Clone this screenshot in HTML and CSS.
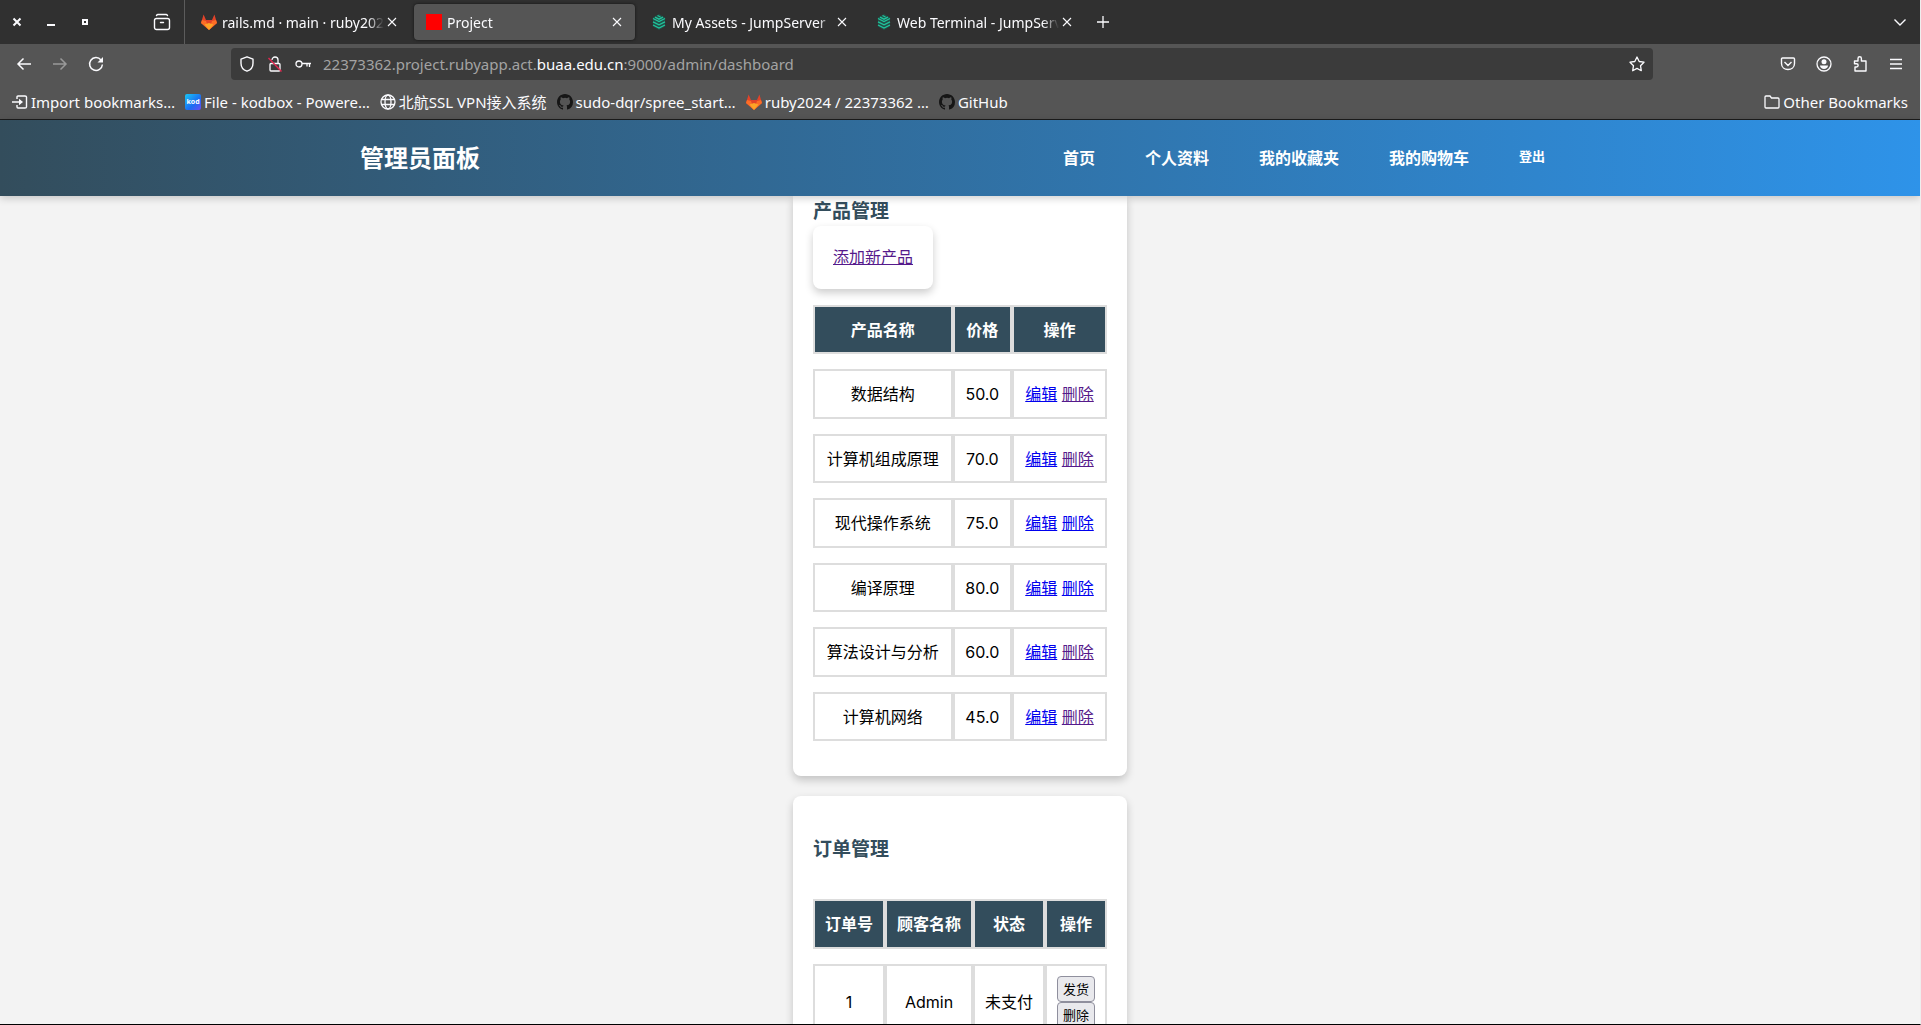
FILE: index.html
```html
<!DOCTYPE html>
<html lang="zh-CN">
<head>
<meta charset="utf-8">
<meta name="viewport" content="width=device-width, initial-scale=1">
<title>Project</title>
<link rel="stylesheet" href="styles.css">
</head>
<body>
<svg class="defs" aria-hidden="true">
  <symbol id="fox" viewBox="0 0 16 16"><path fill="#e24329" d="M0 9 2.600 .5 5 6h6l2.400-5.500L16 9l-8 7z"/><path fill="#fc6d26" d="M0 9l1-3 4 1 3 9zM16 9l-1-3-4 1-3 9z"/><path fill="#fca326" d="M3.500 10.500L8 9l4.500 1.500L8 16z"/></symbol>
  <symbol id="cross" viewBox="0 0 16 16"><path d="M4 4l8 8M12 4l-8 8" fill="none" stroke="currentColor" stroke-width="1.100"/></symbol>
  <symbol id="server" viewBox="0 0 16 16"><path d="M8 0l6 3.500v9L8 16l-6-3.500v-9z" fill="#225048"/><path d="M2 4.500l6 3 6-3M2 7.800l6 3 6-3M2 11l6 3 6-3M4 3.200l4 2 4-2M6.500 1.500l3 1.500" fill="none" stroke="#20c49c" stroke-width="1.300"/></symbol>
  <symbol id="cat" viewBox="0 0 16 16"><path fill="#161616" d="M8 0C3.580 0 0 3.580 0 8c0 3.540 2.290 6.530 5.470 7.590.4.070.55-.17.55-.38 0-.19-.01-.82-.01-1.490-2.010.37-2.530-.49-2.690-.94-.09-.23-.48-.94-.82-1.130-.28-.15-.68-.52-.01-.53.63-.01 1.080.58 1.230.82.72 1.210 1.870.87 2.330.66.07-.52.28-.87.51-1.070-1.780-.2-3.640-.89-3.640-3.950 0-.87.31-1.590.82-2.150-.08-.2-.36-1.020.08-2.120 0 0 .67-.21 2.200.82a7.420 7.420 0 0 1 4 0c1.530-1.040 2.200-.82 2.200-.82.44 1.100.16 1.920.08 2.120.51.56.82 1.270.82 2.150 0 3.070-1.870 3.750-3.650 3.950.29.25.54.73.54 1.480 0 1.070-.01 1.930-.01 2.200 0 .21.15.46.55.38A8.010 8.010 0 0 0 16 8c0-4.420-3.580-8-8-8z"/></symbol>
</svg>

<div class="browser">
  <div class="tabbar">
    <div class="window-controls">
      <button class="win" aria-label="Close window"><svg viewBox="0 0 16 16"><path d="M4.500 4.500l7 7M11.500 4.500l-7 7" stroke="currentColor" stroke-width="2"/></svg></button>
      <button class="win" aria-label="Minimise"><svg viewBox="0 0 16 16"><path d="M4 11h8" stroke="currentColor" stroke-width="2"/></svg></button>
      <button class="win" aria-label="Restore"><svg viewBox="0 0 16 16"><path d="M6 6h4v4H6z" fill="none" stroke="currentColor" stroke-width="2"/></svg></button>
    </div>
    <button class="tabs-view" aria-label="Firefox View"><svg viewBox="0 0 18 18" fill="none" stroke="currentColor" stroke-width="1.400" stroke-linecap="round"><rect x="1.500" y="5.500" width="15" height="11" rx="2"/><path d="M3.500 2.500Q4 1.500 5 1.500h8q1 0 1.500 1M7.500 9.500h3"/></svg></button>
    <div class="tabs">
      <div class="tab"><svg class="ico"><use href="#fox"/></svg><span class="tab-title">rails.md · main · ruby2024</span><button class="tab-close" aria-label="Close tab"><svg class="ico"><use href="#cross"/></svg></button></div>
      <div class="tab active"><span class="favicon"></span><span class="tab-title">Project</span><button class="tab-close" aria-label="Close tab"><svg class="ico"><use href="#cross"/></svg></button></div>
      <div class="tab"><svg class="ico"><use href="#server"/></svg><span class="tab-title">My Assets - JumpServer</span><button class="tab-close" aria-label="Close tab"><svg class="ico"><use href="#cross"/></svg></button></div>
      <div class="tab"><svg class="ico"><use href="#server"/></svg><span class="tab-title">Web Terminal - JumpServer</span><button class="tab-close" aria-label="Close tab"><svg class="ico"><use href="#cross"/></svg></button></div>
      <button class="new-tab" aria-label="New tab"><svg class="ico" viewBox="0 0 16 16"><path d="M8 2v12M2 8h12" stroke="currentColor" stroke-width="1.300"/></svg></button>
    </div>
    <button class="all-tabs" aria-label="List all tabs"><svg class="ico" viewBox="0 0 16 16"><path d="M2.500 5.500L8 11l5.500-5.500" fill="none" stroke="currentColor" stroke-width="1.400"/></svg></button>
  </div>

  <div class="toolbar">
    <div class="history">
      <button aria-label="Back"><svg class="ico" viewBox="0 0 16 16"><path d="M15 8H2M7.500 2.500L2 8l5.500 5.500" fill="none" stroke="currentColor" stroke-width="1.500"/></svg></button>
      <button aria-label="Forward" disabled><svg class="ico" viewBox="0 0 16 16"><path d="M1 8h13M8.500 2.500L14 8l-5.500 5.500" fill="none" stroke="currentColor" stroke-width="1.500"/></svg></button>
      <button aria-label="Reload"><svg class="ico" viewBox="0 0 16 16"><path d="M13 4A6.400 6.400 0 1 0 14.400 8.500" fill="none" stroke="currentColor" stroke-width="1.500"/><path d="M15 1v5.500H9.500z" fill="currentColor"/></svg></button>
    </div>
    <div class="urlbar">
      <svg class="ico" viewBox="0 0 16 16"><path d="M8 .8l6 2.400v4c0 4-3 7-6 8-3-1-6-4-6-8v-4z" fill="none" stroke="currentColor" stroke-width="1.400" stroke-linejoin="round"/></svg>
      <svg class="ico" viewBox="0 0 16 16"><path d="M4 7.500h8q1 0 1 1V14q0 1-1 1H4q-1 0-1-1V8.500q0-1 1-1zM5 4a3 3 0 0 1 6 0v3.500" fill="none" stroke="currentColor" stroke-width="1.300"/><path d="M1.500 2l13 13.500" stroke="#e22850" stroke-width="1.400"/></svg>
      <svg class="ico" viewBox="0 0 16 16"><circle cx="4" cy="8" r="3" fill="none" stroke="currentColor" stroke-width="1.300"/><path d="M7 7.500h9M12 8v2.500M14.500 8v3" fill="none" stroke="currentColor" stroke-width="1.300"/></svg>
      <span class="address">22373362.project.rubyapp.act.<b>buaa.edu.cn</b>:9000/admin/dashboard</span>
      <svg class="ico" viewBox="0 0 16 16"><path d="M8 1l2.200 4.500 4.800.7-3.500 3.500.8 5L8 12.400l-4.300 2.300.8-5L1 6.200l4.800-.7z" fill="none" stroke="currentColor" stroke-width="1.300" stroke-linejoin="round"/></svg>
    </div>
    <div class="actions">
      <button aria-label="Pocket"><svg class="ico" viewBox="0 0 16 16"><path d="M2.500 2h11q1 0 1 1v4.500c0 8-13 8-13 0V3q0-1 1-1zM4.500 6L8 9.500 11.500 6" fill="none" stroke="currentColor" stroke-width="1.400"/></svg></button>
      <button aria-label="Account"><svg class="ico" viewBox="0 0 16 16"><circle cx="8" cy="8" r="7" fill="none" stroke="currentColor" stroke-width="1.300"/><circle cx="8" cy="5.800" r="2.500" fill="currentColor"/><path d="M4 9.500h8c0 2-2 3.500-4 3.500s-4-1.500-4-3.500z" fill="currentColor"/></svg></button>
      <button aria-label="Extensions"><svg class="ico" viewBox="0 0 16 16"><path d="M3 15v-4h1.500a1.600 1.600 0 0 0 0-3.300H2.500V5H6V2.500a1.700 1.700 0 0 1 3.400 0V5H14v10z" fill="none" stroke="currentColor" stroke-width="1.400" stroke-linejoin="round"/></svg></button>
      <button aria-label="Menu"><svg class="ico" viewBox="0 0 16 16"><path d="M2 3.500h12M2 8h12M2 12.500h12" stroke="currentColor" stroke-width="1.300"/></svg></button>
    </div>
  </div>

  <div class="bookmarks">
    <a href="#"><svg class="ico" viewBox="0 0 16 16"><path d="M5 5V3q0-1 1-1h7q1.500 0 1.500 1v10q0 1-1.500 1H6q-1 0-1-1v-2M0 8h9" fill="none" stroke="currentColor" stroke-width="1.400"/><path d="M7 4.800L11 8l-4 3.200z" fill="currentColor"/></svg>Import bookmarks…</a>
    <a href="#"><span class="kod">kod</span>File - kodbox - Powere…</a>
    <a href="#"><svg class="ico" viewBox="0 0 16 16" fill="none" stroke="currentColor" stroke-width="1.300"><circle cx="8" cy="8" r="7"/><ellipse cx="8" cy="8" rx="3" ry="7"/><path d="M1.500 5.500h13M1.500 10.500h13"/></svg>北航SSL VPN接入系统</a>
    <a href="#"><svg class="ico"><use href="#cat"/></svg>sudo-dqr/spree_start…</a>
    <a href="#"><svg class="ico"><use href="#fox"/></svg>ruby2024 / 22373362 …</a>
    <a href="#"><svg class="ico"><use href="#cat"/></svg>GitHub</a>
    <a href="#" class="other"><svg class="ico" viewBox="0 0 16 16"><path d="M1 13V3q0-1 1-1h4l1.500 2H14q1 0 1 1v8q0 1-1 1H2q-1 0-1-1z" fill="none" stroke="currentColor" stroke-width="1.300"/></svg>Other Bookmarks</a>
  </div>
</div>

<header class="site-header">
  <div class="header-inner">
    <h1>管理员面板</h1>
    <nav>
      <a href="#">首页</a>
      <a href="#">个人资料</a>
      <a href="#">我的收藏夹</a>
      <a href="#">我的购物车</a>
      <button class="logout">登出</button>
    </nav>
  </div>
</header>

<main>
  <section class="card products">
    <h2>产品管理</h2>
    <a href="#" class="add visited">添加新产品</a>
    <table>
      <thead><tr><th>产品名称</th><th>价格</th><th>操作</th></tr></thead>
      <tbody>
        <tr><td>数据结构</td><td>50.0</td><td><a href="#">编辑</a> <a href="#" class="visited">删除</a></td></tr>
        <tr><td>计算机组成原理</td><td>70.0</td><td><a href="#">编辑</a> <a href="#" class="visited">删除</a></td></tr>
        <tr><td>现代操作系统</td><td>75.0</td><td><a href="#">编辑</a> <a href="#">删除</a></td></tr>
        <tr><td>编译原理</td><td>80.0</td><td><a href="#">编辑</a> <a href="#">删除</a></td></tr>
        <tr><td>算法设计与分析</td><td>60.0</td><td><a href="#">编辑</a> <a href="#" class="visited">删除</a></td></tr>
        <tr><td>计算机网络</td><td>45.0</td><td><a href="#">编辑</a> <a href="#" class="visited">删除</a></td></tr>
      </tbody>
    </table>
  </section>
  <section class="card orders">
    <h2>订单管理</h2>
    <table>
      <thead><tr><th>订单号</th><th>顾客名称</th><th>状态</th><th>操作</th></tr></thead>
      <tbody>
        <tr><td>1</td><td>Admin</td><td>未支付</td><td><div class="row-actions"><button>发货</button><button>删除</button></div></td></tr>
      </tbody>
    </table>
  </section>
</main>
</body>
</html>
```
FILE: styles.css
```css
* { box-sizing: border-box; }

body {
  margin: 0;
  height: 100vh;
  display: flex;
  flex-direction: column;
  overflow: hidden;
  background: #f3f3f3;
  border-right: 1px solid #eee;
  border-bottom: 1px solid #000;
  font: 16px/24px Inter, "Noto Sans CJK SC", sans-serif;
  color: #000;
}

button { font: inherit; color: inherit; cursor: pointer; }

.defs { display: none; }

.ico { display: block; width: 16px; height: 16px; flex: none; }

/* Browser window */
.browser {
  flex: none;
  background: #555;
  border-bottom: 1px solid #1c1c1c;
  color: #fbfbfe;
  font: 15px/20px "Noto Sans", "Noto Sans CJK SC", sans-serif;
}

.browser button {
  padding: 0;
  border: 0;
  background: none;
}

.tabbar {
  display: flex;
  align-items: center;
  height: 44px;
  padding-right: 12px;
  background: #303030;
  font-size: 14px;
}

.window-controls { display: flex; gap: 18px; padding-left: 9px; }
.win svg { display: block; width: 16px; height: 16px; }
.browser .tabs-view { margin: 0 13px 0 60px; }
.tabs-view svg { display: block; width: 18px; height: 18px; }

.tabs {
  display: flex;
  flex: 1;
  align-items: center;
  gap: 4px;
  height: 44px;
  padding-left: 4px;
  border-left: 1px solid #5c5c5c;
}

.tab {
  display: flex;
  align-items: center;
  width: 221px;
  height: 36px;
  padding: 0 10px 0 12px;
  border-radius: 4px;
}

.tab.active { background: #555; box-shadow: 0 0 3px #111; }

.tab-title {
  flex: 1;
  min-width: 0;
  margin-left: 5px;
  padding-top: 2px;
  overflow: hidden;
  white-space: nowrap;
  mask-image: linear-gradient(to left, transparent, #000 16px);
}

.favicon { width: 16px; height: 16px; background: #f00; }
.browser .new-tab { margin-left: 6px; }

.toolbar {
  display: flex;
  align-items: center;
  height: 40px;
  padding: 0 16px;
}

.history { display: flex; gap: 20px; width: 215px; }
.history button:disabled { color: #999; }

.urlbar {
  display: flex;
  flex: 1;
  align-items: center;
  gap: 12px;
  height: 32px;
  padding: 0 8px;
  background: #3b3b3b;
  border-radius: 4px;
}

.address { flex: 1; color: #a3a3a3; }
.address b { font-weight: 400; color: #fbfbfe; }

.actions {
  display: flex;
  justify-content: flex-end;
  gap: 20px;
  width: 251px;
}

.bookmarks {
  display: flex;
  align-items: center;
  gap: 10px;
  height: 35px;
  padding: 0 12px;
  white-space: nowrap;
}

.bookmarks a {
  display: flex;
  align-items: center;
  gap: 3px;
  color: inherit;
  text-decoration: none;
}

.bookmarks .other { margin-left: auto; }

.kod {
  width: 16px;
  height: 16px;
  border-radius: 2px;
  background: linear-gradient(135deg, #18c8f6, #1b6cf2 60%, #6a4cf5);
  font: 700 7px/16px "Noto Sans", sans-serif;
  text-align: center;
}

/* Site header */
.site-header {
  position: relative;
  z-index: 1;
  flex: none;
  background: linear-gradient(to right, #334d5c, #2e93e9);
  box-shadow: 0 2px 8px rgba(0, 0, 0, .2);
  color: #fff;
}

.header-inner {
  display: flex;
  align-items: center;
  justify-content: space-between;
  width: 1200px;
  max-width: 100%;
  height: 76px;
  margin: 0 auto;
}

h1 { margin: 0; padding-top: 2px; font-size: 24px; line-height: 36px; font-weight: 700; }

nav { display: flex; align-items: center; gap: 50px; padding-right: 15px; }
nav a { color: inherit; font-weight: 700; text-decoration: none; }

.logout {
  padding: 0 0 4px;
  border: 0;
  background: none;
  font-size: 13px;
  line-height: 20px;
  font-weight: 700;
}

/* Dashboard */
main {
  display: flex;
  flex: 1;
  flex-direction: column;
  align-items: center;
  gap: 20px;
  min-height: 0;
  overflow: hidden;
}

.card {
  flex: none;
  width: 334px;
  padding: 0 20px 20px;
  background: #fff;
  border-radius: 8px;
  box-shadow: 0 4px 8px rgba(0, 0, 0, .2);
}

.products { border-radius: 0 0 8px 8px; }

.orders { padding-top: 40px; }

h2 {
  margin: 0;
  color: #334d5c;
  font-size: 19px;
  line-height: 28px;
  font-weight: 700;
}

.products h2 { padding-top: 2px; }

.add {
  display: block;
  width: fit-content;
  height: 63px;
  padding: 19px 20px 20px;
  border-radius: 8px;
  box-shadow: 0 4px 8px rgba(0, 0, 0, .2);
}

main a { color: #00e; }
main a.visited { color: #551a8b; }

table {
  width: 100%;
  border-collapse: separate;
  border-spacing: 0 15px;
}

.products table { margin-top: 1px; }
.orders table { margin-top: 20px; }

th, td {
  height: 50px;
  padding: 10px;
  border: 2px solid #ddd;
  text-align: center;
  white-space: nowrap;
}

th { background: #334d5c; color: #fff; font-weight: 700; }

.products th,
.products tr:nth-child(even) td { height: 49px; }

.row-actions { display: flex; flex-direction: column; align-items: center; }

.row-actions button {
  padding: 0 5px;
  border: 1px solid #8f8f9d;
  border-radius: 4px;
  background: #e9e9ed;
  font-size: 13px;
  line-height: 24px;
}
```
